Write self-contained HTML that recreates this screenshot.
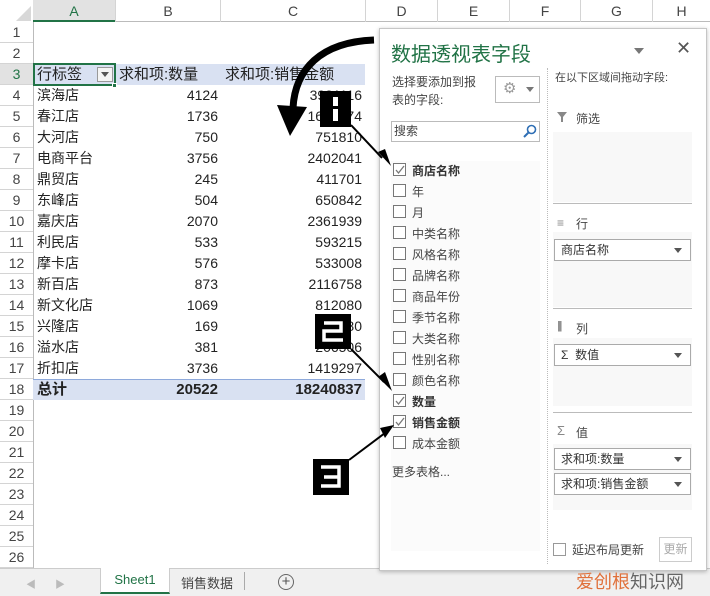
<!DOCTYPE html><html><head><meta charset="utf-8"><style>
*{margin:0;padding:0;box-sizing:border-box}
body{width:710px;height:596px;overflow:hidden;background:#fff;font-family:"Liberation Sans","Noto Sans CJK SC",sans-serif;position:relative}
.a{position:absolute;white-space:nowrap}
.rh{position:absolute;left:0;width:33px;text-align:center;font-size:14px;color:#444;border-bottom:1px solid #d4d4d4;height:21px;line-height:21px;background:#fff}
.cell{position:absolute;font-size:14px;height:21px;line-height:21px;color:#222}
.cb{position:absolute;width:13px;height:13px;border:1px solid #777;background:#fff}
.lbl{position:absolute;font-size:12px;color:#444}
.dd{position:absolute;height:22px;border:1px solid #aaa;background:#fff;font-size:12px;line-height:20px;padding-left:6px;color:#333}
.dd:after{content:"";position:absolute;right:8px;top:8px;border:4px solid transparent;border-top:5px solid #555}
</style></head><body>
<div class="a" style="left:0;top:0;width:710px;height:22px;background:#fff;border-bottom:1px solid #bbb"></div>
<div class="a" style="left:0;top:0;width:33px;height:22px;background:#fff"></div>
<svg class="a" style="left:16px;top:6px" width="15" height="15"><polygon points="15,0 15,15 0,15" fill="#d8d8d8"/></svg>
<div class="a" style="left:33px;top:0;width:82px;height:22px;background:#e2e2e2;border-bottom:2px solid #217346;color:#217346;text-align:center;line-height:22px;font-size:14px">A</div>
<div class="a" style="left:115px;top:0;width:105px;height:22px;text-align:center;line-height:22px;font-size:14px;color:#444;border-left:1px solid #d4d4d4">B</div>
<div class="a" style="left:220px;top:0;width:145px;height:22px;text-align:center;line-height:22px;font-size:14px;color:#444;border-left:1px solid #d4d4d4">C</div>
<div class="a" style="left:365px;top:0;width:72px;height:22px;text-align:center;line-height:22px;font-size:14px;color:#444;border-left:1px solid #d4d4d4">D</div>
<div class="a" style="left:437px;top:0;width:72px;height:22px;text-align:center;line-height:22px;font-size:14px;color:#444;border-left:1px solid #d4d4d4">E</div>
<div class="a" style="left:509px;top:0;width:71px;height:22px;text-align:center;line-height:22px;font-size:14px;color:#444;border-left:1px solid #d4d4d4">F</div>
<div class="a" style="left:580px;top:0;width:72px;height:22px;text-align:center;line-height:22px;font-size:14px;color:#444;border-left:1px solid #d4d4d4">G</div>
<div class="a" style="left:652px;top:0;width:58px;height:22px;text-align:center;line-height:22px;font-size:14px;color:#444;border-left:1px solid #d4d4d4">H</div>
<div class="a" style="left:33px;top:22px;width:1px;height:546px;background:#bbb"></div>
<div class="a" style="left:33px;top:64px;width:332px;height:21px;background:#d9e1f2"></div>
<div class="a" style="left:33px;top:379px;width:332px;height:21px;background:#d9e1f2;border-top:1px solid #8ea9db"></div>
<div class="a" style="left:33px;top:63px;width:83px;height:23px;border:2px solid #217346"></div>
<div class="a" style="left:112px;top:83px;width:5px;height:5px;background:#217346;border:1px solid #fff"></div>
<div class="a" style="left:97px;top:67px;width:16px;height:15px;border:1px solid #999;background:#f4f4f4"></div>
<svg class="a" style="left:101px;top:72px" width="8" height="5"><polygon points="0,0 8,0 4,5" fill="#555"/></svg>
<div id="rows"></div>
<div class="cell" style="left:37px;top:64px;font-size:15px">行标签</div>
<div class="cell" style="left:119px;top:64px;font-size:15px">求和项:数量</div>
<div class="cell" style="left:225px;top:64px;font-size:15px">求和项:销售金额</div>
<div id="data"></div>
<script>
var r='';for(var i=1;i<=26;i++){r+='<div class="rh" style="top:'+(22+(i-1)*21)+'px;'+(i==3?'background:#e2e2e2;color:#217346':'')+'">'+i+'</div>';}
document.getElementById('rows').innerHTML=r;
var d=[["滨海店",4124,3981116],["春江店",1736,1669974],["大河店",750,751810],["电商平台",3756,2402041],["鼎贸店",245,411701],["东峰店",504,650842],["嘉庆店",2070,2361939],["利民店",533,593215],["摩卡店",576,533008],["新百店",873,2116758],["新文化店",1069,812080],["兴隆店",169,322580],["溢水店",381,206506],["折扣店",3736,1419297],["总计",20522,18240837]];
var h='';d.forEach(function(x,k){var t=85+k*21;var b=k==14?'font-weight:bold;font-size:15px;':'';h+='<div class="cell" style="left:37px;top:'+t+'px;'+b+'">'+x[0]+'</div><div class="cell" style="left:115px;width:103px;text-align:right;top:'+t+'px;'+b+'">'+x[1]+'</div><div class="cell" style="left:220px;width:142px;text-align:right;top:'+t+'px;'+b+'">'+x[2]+'</div>';});
document.getElementById('data').innerHTML=h;
</script>
<div class="a" style="left:0;top:568px;width:710px;height:28px;background:#f0f0f0;border-top:1px solid #ccc"></div>
<div class="a" style="left:26px;top:576px;font-size:10px;color:#bbb">◀</div>
<div class="a" style="left:55px;top:576px;font-size:10px;color:#bbb">▶</div>
<div class="a" style="left:100px;top:568px;width:70px;height:26px;background:#fff;border-bottom:2px solid #217346;border-left:1px solid #ccc;border-right:1px solid #ccc;text-align:center;line-height:24px;font-size:13px;color:#217346">Sheet1</div>
<div class="a" style="left:181px;top:573px;font-size:13px;color:#444">销售数据</div>
<div class="a" style="left:244px;top:572px;width:1px;height:18px;background:#aaa"></div>
<div class="a" style="left:278px;top:574px;width:16px;height:16px;border:1px solid #666;border-radius:50%;text-align:center;line-height:13px;font-size:15px;color:#555">+</div>
<div class="a" style="left:379px;top:28px;width:328px;height:543px;background:#fff;border:1px solid #c6c6c6;box-shadow:0 1px 4px rgba(0,0,0,.25)"></div>
<div class="a" style="left:391px;top:38px;font-size:20px;color:#217346">数据透视表字段</div>
<svg class="a" style="left:634px;top:48px" width="10" height="6"><polygon points="0,0 10,0 5,6" fill="#777"/></svg>
<div class="a" style="left:676px;top:38px;font-size:18px;color:#555">✕</div>
<div class="lbl" style="left:392px;top:73px;line-height:18px">选择要添加到报<br>表的字段:</div>
<div class="a" style="left:495px;top:76px;width:45px;height:27px;border:1px solid #bbb"></div>
<div class="a" style="left:503px;top:79px;font-size:15px;color:#999">⚙</div>
<svg class="a" style="left:526px;top:87px" width="8" height="5"><polygon points="0,0 8,0 4,5" fill="#777"/></svg>
<div class="a" style="left:391px;top:121px;width:149px;height:21px;border:1px solid #bbb;font-size:12px;color:#444;padding-left:2px;line-height:19px">搜索</div>
<svg class="a" style="left:523px;top:124px" width="14" height="14"><circle cx="8.5" cy="5.5" r="4" fill="none" stroke="#2f6fb5" stroke-width="1.6"/><line x1="5.5" y1="8.5" x2="1" y2="13" stroke="#2f6fb5" stroke-width="2"/></svg>
<div class="a" style="left:391px;top:161px;width:149px;height:390px;background:#fbfbfb"></div>
<div id="flds"></div>
<script>
var f=["商店名称","年","月","中类名称","风格名称","品牌名称","商品年份","季节名称","大类名称","性别名称","颜色名称","数量","销售金额","成本金额"],c=[0,11,12];
var s='';f.forEach(function(x,k){var t=163+k*21;var ch=c.indexOf(k)>=0;s+='<div class="cb" style="left:393px;top:'+t+'px">'+(ch?'<svg width="11" height="11" style="position:absolute;left:0;top:0"><polyline points="2,6 4.5,9 10,2" fill="none" stroke="#777" stroke-width="1.3"/></svg>':'')+'</div><div class="lbl" style="left:412px;top:'+(t-1)+'px;'+(ch?'font-weight:bold;color:#333':'')+'">'+x+'</div>';});
document.getElementById('flds').innerHTML=s;
</script>
<div class="lbl" style="left:392px;top:463px">更多表格...</div>
<div class="a" style="left:547px;top:68px;width:0;height:496px;border-left:1px dotted #bbb"></div>
<div class="lbl" style="left:555px;top:69px;font-size:11px">在以下区域间拖动字段:</div>
<svg class="a" style="left:557px;top:112px" width="10" height="10"><polygon points="0,0 10,0 6,5 6,10 4,10 4,5" fill="#888"/></svg>
<div class="lbl" style="left:576px;top:110px">筛选</div>
<div class="a" style="left:553px;top:132px;width:139px;height:70px;background:#f8f8f8"></div>
<div class="a" style="left:553px;top:203px;width:139px;height:1px;background:#bbb"></div>
<div class="a" style="left:557px;top:216px;font-size:12px;color:#888">≡</div>
<div class="lbl" style="left:576px;top:215px">行</div>
<div class="a" style="left:553px;top:232px;width:139px;height:75px;background:#f8f8f8"></div>
<div class="dd" style="left:554px;top:239px;width:137px">商店名称</div>
<div class="a" style="left:553px;top:308px;width:139px;height:1px;background:#bbb"></div>
<div class="a" style="left:557px;top:320px;font-size:11px;color:#888;letter-spacing:-2px">||||</div>
<div class="lbl" style="left:576px;top:320px">列</div>
<div class="a" style="left:553px;top:338px;width:139px;height:68px;background:#f8f8f8"></div>
<div class="dd" style="left:554px;top:344px;width:137px">Σ&nbsp; 数值</div>
<div class="a" style="left:553px;top:412px;width:139px;height:1px;background:#bbb"></div>
<div class="a" style="left:557px;top:423px;font-size:13px;color:#888">Σ</div>
<div class="lbl" style="left:576px;top:424px">值</div>
<div class="a" style="left:553px;top:444px;width:139px;height:66px;background:#f8f8f8"></div>
<div class="dd" style="left:554px;top:448px;width:137px">求和项:数量</div>
<div class="dd" style="left:554px;top:473px;width:137px">求和项:销售金额</div>
<div class="cb" style="left:553px;top:543px;border-color:#999"></div>
<div class="lbl" style="left:572px;top:541px">延迟布局更新</div>
<div class="a" style="left:659px;top:537px;width:33px;height:25px;border:1px solid #ccc;font-size:12px;color:#aaa;text-align:center;line-height:23px">更新</div>
<svg class="a" style="left:0;top:0" width="710" height="596">
<path d="M374,40 C320,42 295,70 293,108" fill="none" stroke="#000" stroke-width="7"/>
<polygon points="277,105 307,107 290,136" fill="#000"/>
<rect x="320" y="91" width="31" height="36" fill="#000"/>
<rect x="333" y="97" width="5" height="24" fill="#fff"/><rect x="333" y="106" width="5" height="3" fill="#000"/>
<line x1="351" y1="125" x2="382" y2="158" stroke="#000" stroke-width="2"/><polygon points="378,152 391,166 385,149" fill="#000"/>
<rect x="315" y="314" width="36" height="35" fill="#000"/>
<path d="M324,323 H341 V331 H324 V340 H343" fill="none" stroke="#fff" stroke-width="3.5"/>
<line x1="351" y1="349" x2="384" y2="382" stroke="#000" stroke-width="2"/><polygon points="378,377 392,391 385,372" fill="#000"/>
<rect x="313" y="459" width="36" height="36" fill="#000"/>
<path d="M321,467 H339 V486 H321 M324,477 H339" fill="none" stroke="#fff" stroke-width="3.5"/>
<line x1="349" y1="460" x2="385" y2="433" stroke="#000" stroke-width="2"/><polygon points="380,428 394,425 385,438" fill="#000"/>
</svg>
<div class="a" style="left:576px;top:568px;font-size:18px;color:#666"><span style="color:#e0703a">爱创根</span>知识网</div>
</body></html>
